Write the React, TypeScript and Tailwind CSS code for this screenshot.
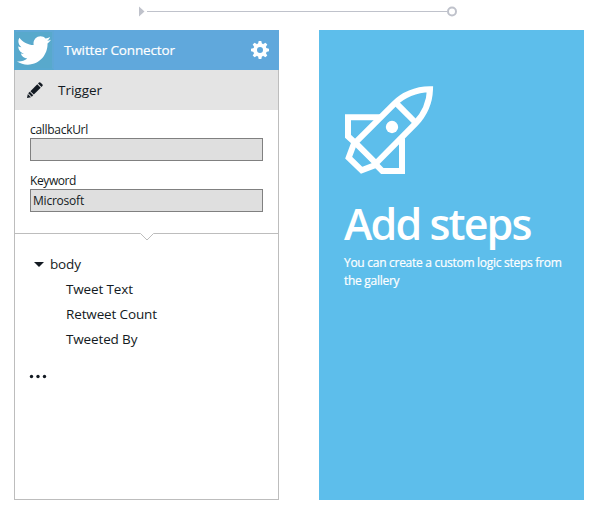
import React from "react";

const BIRD =
  "M23.954 4.569c-.885.389-1.83.654-2.825.775 1.014-.611 1.794-1.574 2.163-2.723-.951.555-2.005.959-3.127 1.184-.896-.959-2.173-1.559-3.591-1.559-2.717 0-4.92 2.203-4.92 4.917 0 .39.045.765.127 1.124C7.691 8.094 4.066 6.13 1.64 3.161c-.427.722-.666 1.561-.666 2.475 0 1.71.87 3.213 2.188 4.096-.807-.026-1.566-.248-2.228-.616v.061c0 2.385 1.693 4.374 3.946 4.827-.413.111-.849.171-1.296.171-.314 0-.615-.03-.916-.086.631 1.953 2.445 3.377 4.604 3.417-1.68 1.319-3.809 2.105-6.102 2.105-.39 0-.779-.023-1.17-.067 2.189 1.394 4.768 2.209 7.557 2.209 9.054 0 13.999-7.496 13.999-13.986 0-.209 0-.42-.015-.63.961-.689 1.8-1.56 2.46-2.548l-.047-.02z";

function TwitterLogo() {
  return (
    <div className="flex size-10 items-center justify-center border-2 border-[#5fa8d6] border-l-[#58a9d0] border-b-[#58a9d0] bg-[#58a9cc]">
      <svg className="h-[29px] w-[34px] shrink-0" viewBox="0 2 24 20" preserveAspectRatio="none">
        <path d={BIRD} fill="#fff" />
      </svg>
    </div>
  );
}

function Gear() {
  return (
    <svg className="size-[18px]" viewBox="-9 -9 18 18" fill="none" stroke="#fff">
      <circle r="4.9" strokeWidth="3.8" />
      {[0, 45, 90, 135].map((a) => (
        <g key={a} transform={`rotate(${a})`} fill="#fff" stroke="none">
          <path d="M-2 -6 L-1.3 -9 H1.3 L2 -6Z" />
          <path d="M-2 6 L-1.3 9 H1.3 L2 6Z" />
        </g>
      ))}
    </svg>
  );
}

function Pencil() {
  return (
    <svg className="size-4" viewBox="0 0 16 16" fill="#131a22">
      <path d="M0 16 L.8 12 L4 15.2Z" />
      <path d="M1.2 11.2 L2.8 9.8 L6.2 13.2 L4.8 14.8Z" />
      <path d="M3.4 9.2 L10.3 2.3 L13.7 5.7 L6.8 12.6Z" />
      <path d="M11 1.6 L12 .6 Q12.8 -.1 13.7 .7 L15.3 2.3 Q16.1 3.2 15.4 4 L14.4 5Z" />
    </svg>
  );
}

function Rocket() {
  return (
    <svg className="size-[90px]" viewBox="27 30 270 270" fill="none" stroke="#fff" strokeWidth="18">
      <path d="M61 203 L176 88 Q220 44 285 43 Q283 102 241 146 L123 265 Z" />
      <path d="M182 83 L243 144" />
      <path d="M136 127 H39 V184 L61 204" />
      <path d="M201 190 V288 H142 L120 266" />
      <path d="M58 203 L41 248 L80 286 L126 268" />
      <circle cx="171" cy="156" r="18.5" fill="#fff" stroke="none" />
    </svg>
  );
}

function Field({ label, value, className }: { label: string; value: string; className: string }) {
  return (
    <label className="flex flex-col text-xs">
      <span className={`h-[18px] self-start leading-[19px] whitespace-nowrap ${className}`}>{label}</span>
      <span className="h-[23px] border border-[#808080] bg-[#dfdfdf] px-[2px] leading-[21px] tracking-[-0.22px]">
        {value}
      </span>
    </label>
  );
}

function TriggerCard() {
  return (
    <section className="flex h-[470px] w-[265px] flex-col">
      <header className="flex h-10 shrink-0 items-center bg-[#60a8dc] pr-[10px] text-white">
        <TwitterLogo />
        <h2 className="ml-[10px] flex-1 text-[13.5px] tracking-[-0.14px] [-webkit-text-stroke:0.2px_white]">
          Twitter Connector
        </h2>
        <Gear />
      </header>
      <div className="flex flex-1 flex-col border border-t-0 border-[#bdbdbd]">
        <div className="flex h-10 shrink-0 items-center gap-[15px] bg-[#e4e4e4] pl-3">
          <Pencil />
          <span className="text-[13.5px]">Trigger</span>
        </div>
        <div className="flex h-[123px] shrink-0 flex-col gap-[10px] px-[15px] pt-[10px]">
          <Field label="callbackUrl" value="" className="tracking-[-0.3px]" />
          <Field label="Keyword" value="Microsoft" className="tracking-[-0.4px]" />
        </div>
        <svg className="h-2 w-[263px] shrink-0" viewBox="0 0 263 8" fill="none" stroke="#bdbdbd">
          <path d="M0 .5 H125.5 L132 7 L138.5 .5 H263" />
        </svg>
        <div className="flex flex-col pt-[11px] pl-[19px] text-[13.5px] leading-[25px] tracking-[-0.14px]">
          <div className="flex items-center gap-[6px]">
            <svg className="h-[5px] w-[10px]" viewBox="0 0 10 5" fill="#131a22">
              <path d="M0 0 H10 L5 5Z" />
            </svg>
            <span>body</span>
          </div>
          <ul className="pl-8">
            <li>Tweet Text</li>
            <li>Retweet Count</li>
            <li>Tweeted By</li>
          </ul>
        </div>
        <svg className="mt-[22px] ml-[14px] h-[5px] w-[19px]" viewBox="0 0 19 5" fill="#131a22">
          <circle cx="2.5" cy="2.5" r="1.7" />
          <circle cx="9" cy="2.5" r="1.7" />
          <circle cx="15.5" cy="2.5" r="1.7" />
        </svg>
      </div>
    </section>
  );
}

function AddSteps() {
  return (
    <section className="h-[470px] w-[265px] bg-[#5dbeeb] pt-[55px] pl-[25px] text-white">
      <Rocket />
      <h1 className="mt-[19px] h-[60px] text-[43px] leading-[60px] font-semibold tracking-[-1.9px] whitespace-nowrap">
        Add steps
      </h1>
      <p className="text-xs leading-[18px] tracking-[-0.28px] whitespace-nowrap [-webkit-text-stroke:0.2px_white]">
        You can create a custom logic steps from
        <br />
        the gallery
      </p>
    </section>
  );
}

export default function App() {
  return (
    <main className="h-[506px] w-[591px] overflow-hidden bg-white font-['Open_Sans',sans-serif] text-[#131a22]">
      <div className="h-[30px] pt-[6px] pl-[139px]">
        <svg className="h-[11px] w-[320px]" viewBox="0 0 320 11" fill="none" stroke="#bfc2cb">
          <path d="M0 .5 L5.5 5.5 L0 10.5Z" fill="#bfc2cb" stroke="none" />
          <path d="M8 5.5 H308" />
          <circle cx="313" cy="5.5" r="4" strokeWidth="2" />
        </svg>
      </div>
      <div className="flex gap-10 pl-[14px]">
        <TriggerCard />
        <AddSteps />
      </div>
    </main>
  );
}
